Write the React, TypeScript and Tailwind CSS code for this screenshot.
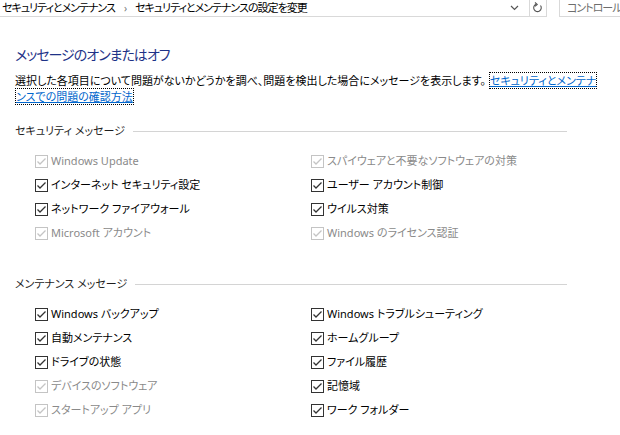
import React from 'react';

type Item = { label: string; disabled?: boolean };

const securityItems: [Item, Item][] = [
  [{ label: 'Windows Update', disabled: true }, { label: 'スパイウェアと不要なソフトウェアの対策', disabled: true }],
  [{ label: 'インターネット セキュリティ設定' }, { label: 'ユーザー アカウント制御' }],
  [{ label: 'ネットワーク ファイアウォール' }, { label: 'ウイルス対策' }],
  [{ label: 'Microsoft アカウント', disabled: true }, { label: 'Windows のライセンス認証', disabled: true }],
];

const maintenanceItems: [Item, Item][] = [
  [{ label: 'Windows バックアップ' }, { label: 'Windows トラブルシューティング' }],
  [{ label: '自動メンテナンス' }, { label: 'ホームグループ' }],
  [{ label: 'ドライブの状態' }, { label: 'ファイル履歴' }],
  [{ label: 'デバイスのソフトウェア', disabled: true }, { label: '記憶域' }],
  [{ label: 'スタートアップ アプリ', disabled: true }, { label: 'ワーク フォルダー' }],
];

function CheckBox({ disabled }: { disabled?: boolean }) {
  const c = disabled ? '#c4c4c4' : '#333333';
  return (
    <svg width="13" height="13" viewBox="0 0 13 13" className="shrink-0">
      <rect x="0.5" y="0.5" width="12" height="12" fill="#fff" stroke={c} />
      <path d="M2.5 6.5 L5 9 L10.5 3.5" fill="none" stroke={c} strokeWidth="1.3" />
    </svg>
  );
}

function CheckRow({ item }: { item: Item }) {
  return (
    <label className="flex items-center gap-[3px] h-6">
      <CheckBox disabled={item.disabled} />
      <span className={item.disabled ? 'text-[#8a8a8a]' : 'text-black'}>{item.label}</span>
    </label>
  );
}

function Section({ title, rows }: { title: string; rows: [Item, Item][] }) {
  return (
    <section>
      <div className="flex items-center gap-2 h-5 pr-[53px]">
        <span className="text-[#1e1e1e]">{title}</span>
        <div className="flex-1 h-px bg-[#d4d4d4]" />
      </div>
      <div className="mt-2 pl-5 grid grid-cols-[276px_1fr]">
        {rows.map(([a, b]) => (
          <React.Fragment key={a.label}>
            <CheckRow item={a} />
            <CheckRow item={b} />
          </React.Fragment>
        ))}
      </div>
    </section>
  );
}

export default function App() {
  return (
    <div
      className="w-[620px] h-[435px] overflow-hidden bg-white text-[11px] leading-4 [font-feature-settings:'palt']"
      style={{ fontFamily: '"Noto Sans", "Noto Sans CJK JP", sans-serif' }}
    >
      {/* address bar + search */}
      <div className="flex h-[17px] items-stretch">
        <div className="flex flex-1 items-center border-b border-[#d9d9d9] pl-[2px] tracking-[-1px]">
          <span>セキュリティとメンテナンス</span>
          <span className="mx-[9px] text-[#777] text-[10px]">›</span>
          <span>セキュリティとメンテナンスの設定を変更</span>
          <div className="ml-auto flex h-full items-center">
            <svg width="9" height="6" viewBox="0 0 9 6" className="mr-[10px]">
              <path d="M1 1 L4.5 4.5 L8 1" fill="none" stroke="#555" strokeWidth="1.2" />
            </svg>
            <div className="h-full w-px bg-[#d9d9d9]" />
            <svg width="16" height="14" viewBox="0 0 16 14">
              <path d="M10.5 4.5 A3.8 3.8 0 1 1 6 3.3" fill="none" stroke="#555" strokeWidth="1.1" />
              <path d="M5 1.5 L7.2 3.4 L5 5.2" fill="none" stroke="#555" strokeWidth="1.1" />
            </svg>
            <div className="h-full w-px bg-[#d9d9d9]" />
          </div>
        </div>
        <div className="w-3" />
        <div className="w-[61px] shrink-0 border-l border-b border-[#d9d9d9] pl-[7px] flex items-center text-[#6d6d6d] whitespace-nowrap tracking-[-1px]">
          コントロール
        </div>
      </div>

      <div className="pl-[15px] pt-[28px]">
        <h1 className="text-[14px] leading-5 tracking-[-1px] text-[#1e3287]">メッセージのオンまたはオフ</h1>
        <p className="mt-[8px] w-[588px] leading-4">
          選択した各項目について問題がないかどうかを調べ、問題を検出した場合にメッセージを表示します。{' '}
          <a className="text-[#0066cc] underline outline-none border border-dotted border-black box-decoration-clone">
            セキュリティとメンテナンスでの問題の確認方法
          </a>
        </p>

        <div className="mt-[16px]">
          <Section title="セキュリティ メッセージ" rows={securityItems} />
        </div>
        <div className="mt-[29px]">
          <Section title="メンテナンス メッセージ" rows={maintenanceItems} />
        </div>
      </div>
    </div>
  );
}
